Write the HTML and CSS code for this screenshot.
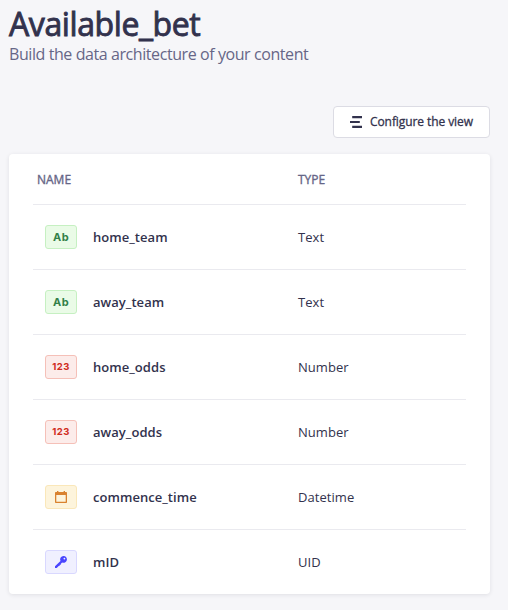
FILE: index.html
```html
<!DOCTYPE html>
<html lang="en">
<head>
<meta charset="utf-8">
<title>Available_bet</title>
<link rel="stylesheet" href="styles.css">
</head>
<body>
<main class="page">
  <header class="heading">
    <h1 class="title">Available_bet</h1>
    <p class="subtitle">Build the data architecture of your content</p>
  </header>
  <div class="actions">
    <button class="button" type="button">
      <svg class="button-icon" viewBox="0 0 12 12"><path d="M2.200 0H12v2.200H2.200zM0 4.900h9.800v2.200H0zM2.200 9.800H12V12H2.200z"/></svg>
      <span>Configure the view</span>
    </button>
  </div>
  <section class="card">
    <div class="row head"><span>NAME</span><span>TYPE</span></div>
    <div class="row"><div class="field"><span class="badge text">Ab</span><span class="name">home_team</span></div><span class="type">Text</span></div>
    <div class="row"><div class="field"><span class="badge text">Ab</span><span class="name">away_team</span></div><span class="type">Text</span></div>
    <div class="row"><div class="field"><span class="badge number">123</span><span class="name">home_odds</span></div><span class="type">Number</span></div>
    <div class="row"><div class="field"><span class="badge number">123</span><span class="name">away_odds</span></div><span class="type">Number</span></div>
    <div class="row"><div class="field"><span class="badge date"><svg viewBox="0 0 12 12"><path fill-rule="evenodd" d="M2 0h1.400v1h5.200V0H10v1h1.200q.8 0 .8.8v9.400q0 .8-.8.8H.8q-.8 0-.8-.8V1.800Q0 1 .8 1H2zM1.300 4v6.700h9.400V4z"/></svg></span><span class="name">commence_time</span></div><span class="type">Datetime</span></div>
    <div class="row"><div class="field"><span class="badge uid"><svg viewBox="0 0 12 12"><path fill-rule="evenodd" d="M8.600 0a3.400 3.400 0 1 1-1.500 6.500L5.900 7.700l-.1 1-1 .1-.1 1-1 .1L1.700 12H0v-1.700l5.500-5.400A3.400 3.400 0 0 1 8.600 0zM9.400 1.700a.9.9 0 1 0 0 1.800.9.900 0 0 0 0-1.800z"/></svg></span><span class="name">mID</span></div><span class="type">UID</span></div>
  </section>
</main>
</body>
</html>
```
FILE: styles.css
```css
* { box-sizing: border-box; }
body {
  margin: 0;
  background: #f6f6f9;
  color: #32324d;
  font-family: "Open Sans", "Noto Sans", sans-serif;
}
.page { padding: 4px 18px 0 9px; height: 610px; overflow: hidden; }
.heading { height: 102px; }
.title { margin: 0; font-size: 32px; line-height: 39px; font-weight: 400; letter-spacing: -0.4px; -webkit-text-stroke: 0.9px currentColor; }
.subtitle { margin: 0; font-size: 16px; line-height: 22px; color: #666687; letter-spacing: -0.42px; }
.actions { display: flex; justify-content: flex-end; }
.button {
  display: flex; align-items: center; gap: 8px;
  width: 157px; height: 32px; padding: 0 0 0 16px;
  border: 1px solid #dcdce4; border-radius: 4px;
  background: #fff; color: #32324d;
  font: 400 12px/16px "Open Sans", "Noto Sans", sans-serif;
  letter-spacing: -0.08px;
  -webkit-text-stroke: 0.3px currentColor;
  white-space: nowrap;
}
.button-icon { width: 12px; height: 12px; fill: currentColor; }
.card {
  margin-top: 16px; height: 440px; padding: 0 24px;
  border-radius: 4px; background: #fff;
  box-shadow: 0 1px 4px rgba(33, 33, 52, .1);
}
.row {
  display: grid; grid-template-columns: 261px 1fr; align-items: center;
  height: 65px; padding-left: 4px; border-bottom: 1px solid #eaeaef;
  font-size: 14px; line-height: 20px;
}
.row:last-child { border-bottom: 0; height: 64px; }
.row.head { height: 51px; padding-top: 2px; font-size: 12px; font-weight: 400; color: #666687; -webkit-text-stroke: 0.35px currentColor; }
.field { display: flex; align-items: center; gap: 16px; padding-left: 8px; }
.name { font-size: 13px; font-weight: 600; letter-spacing: 0.05px; }
.type { font-size: 13px; letter-spacing: 0.05px; }
.badge {
  display: flex; align-items: center; justify-content: center;
  width: 32px; height: 24px; border: 1px solid; border-radius: 3px;
  font-family: Inter, sans-serif; font-weight: 700;
}
.badge svg { width: 12px; height: 12px; fill: currentColor; }
.text { background: #eafbe7; border-color: #c6f0c2; color: #328048; font-size: 11px; letter-spacing: 0.4px; }
.number { background: #fcecea; border-color: #f5c0b8; color: #d02b20; font-size: 9.5px; letter-spacing: 0.4px; }
.date { background: #fdf4dc; border-color: #fae7b9; color: #d9822f; }
.uid { background: #f0f0ff; border-color: #d9d8ff; color: #4945ff; }
```
